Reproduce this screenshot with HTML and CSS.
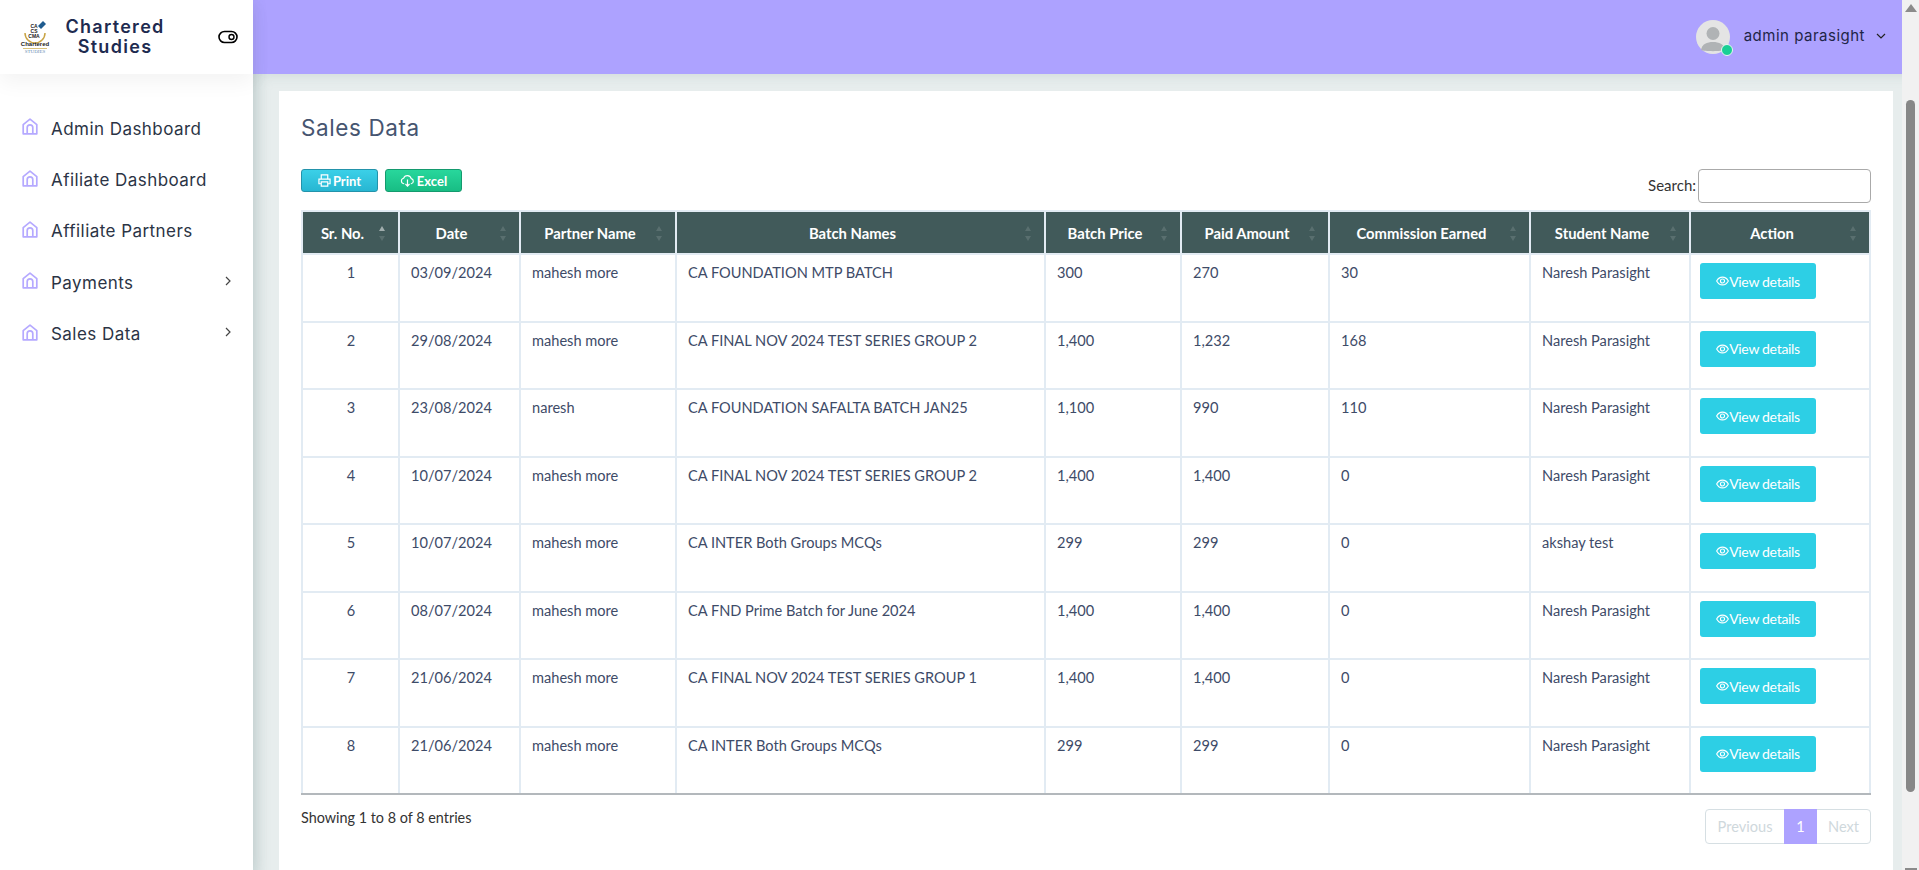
FILE: index.html
```html
<!DOCTYPE html>
<html lang="en">
<head>
<meta charset="utf-8">
<title>Sales Data</title>
<link rel="stylesheet" href="styles.css">
</head>
<body>
<svg class="defs" width="0" height="0" aria-hidden="true">
  <symbol id="home" viewBox="0 0 16 17">
    <path d="M1.200 6.600 8 1.200l6.800 5.400v9.200H1.200z" fill="none" stroke="currentColor" stroke-width="1.700" stroke-linejoin="round"/>
    <path d="M5.200 15.600V9.600a2.800 2.800 0 0 1 5.600 0v6" fill="none" stroke="currentColor" stroke-width="1.700"/>
  </symbol>
  <symbol id="eye" viewBox="0 0 14 10">
    <path d="M.7 5C2.200 2.200 4.400.8 7 .8s4.800 1.400 6.300 4.200C11.800 7.800 9.600 9.200 7 9.200S2.200 7.800.7 5z" fill="none" stroke="currentColor" stroke-width="1.200"/>
    <circle cx="7" cy="5" r="2.200" fill="none" stroke="currentColor" stroke-width="1.200"/>
  </symbol>
</svg>
<div class="app">
  <aside class="sidebar">
    <div class="brand">
      <svg class="logo" viewBox="0 0 30 38" width="30" height="38">
        <path d="M5 15a10 10 0 0 0 20 0" fill="none" stroke="#c9a445" stroke-width="1.500"/>
        <path d="M18 8l5-5 3 3-5 5z" fill="#1f5c8f"/>
        <text class="logo-s" x="14" y="10">CA</text>
        <text class="logo-s" x="14" y="15">CS</text>
        <text class="logo-s" x="14" y="20">CMA</text>
        <text class="logo-m" x="15" y="28">Chartered</text>
        <rect x="3" y="30" width="24" height="1" fill="#d9c27a"/>
        <text class="logo-t" x="15" y="35">STUDIES</text>
      </svg>
      <div class="brand-name">Chartered<br>Studies</div>
      <svg class="toggle" viewBox="0 0 20 14" width="20" height="14">
        <rect x="1" y="1.500" width="18" height="11" rx="5.500" fill="none" stroke="#000" stroke-width="1.600"/>
        <circle cx="13.500" cy="7" r="2.500" fill="none" stroke="#000" stroke-width="1.400"/>
      </svg>
    </div>
    <nav class="menu">
      <a class="menu-item"><svg class="home"><use href="#home"/></svg><span>Admin Dashboard</span></a>
      <a class="menu-item"><svg class="home"><use href="#home"/></svg><span>Afiliate Dashboard</span></a>
      <a class="menu-item"><svg class="home"><use href="#home"/></svg><span>Affiliate Partners</span></a>
      <a class="menu-item"><svg class="home"><use href="#home"/></svg><span>Payments</span><svg class="chev" viewBox="0 0 6 10"><path d="M1 1l4 4-4 4" fill="none" stroke="currentColor" stroke-width="1.200"/></svg></a>
      <a class="menu-item"><svg class="home"><use href="#home"/></svg><span>Sales Data</span><svg class="chev" viewBox="0 0 6 10"><path d="M1 1l4 4-4 4" fill="none" stroke="currentColor" stroke-width="1.200"/></svg></a>
    </nav>
  </aside>
  <div class="main">
    <header class="topbar">
      <div class="avatar">
        <svg viewBox="0 0 34 34" width="34" height="34">
          <circle cx="17" cy="17" r="17" fill="#e4e4e4"/>
          <circle cx="17" cy="13.500" r="6.500" fill="#b0b3b5"/>
          <path d="M5 30c1-6 6-8 12-8s11 2 12 8c-3 1.500-21 1.500-24 0z" fill="#b0b3b5"/>
        </svg>
        <i class="status"></i>
      </div>
      <span class="username">admin parasight</span>
      <svg class="caret" viewBox="0 0 10 6" width="10" height="6"><path d="M1 1l4 4 4-4" fill="none" stroke="#222" stroke-width="1.200"/></svg>
    </header>
    <main class="content">
      <section class="card">
        <h1 class="title">Sales Data</h1>
        <div class="toolbar">
          <div class="actions">
            <button class="tool tool-print"><svg viewBox="0 0 14 14" width="13" height="13"><path d="M3.500 5V1h7v4M3.500 10.500H1V5.500h12v5h-2.500M3.500 8.500h7V13h-7z" fill="none" stroke="currentColor" stroke-width="1.300"/></svg>Print</button>
            <button class="tool tool-excel"><svg viewBox="0 0 16 14" width="15" height="13"><path d="M4.500 10.500H4A3 3 0 0 1 3.800 4.600 4.300 4.300 0 0 1 12 5a2.800 2.800 0 0 1 0 5.500h-.5" fill="none" stroke="currentColor" stroke-width="1.200"/><path d="M8 6v7M5.800 10.800 8 13l2.200-2.200" fill="none" stroke="currentColor" stroke-width="1.300"/></svg>Excel</button>
          </div>
          <label class="search">Search:<input type="text"></label>
        </div>
        <table class="grid">
          <colgroup>
            <col class="c1"><col class="c2"><col class="c3"><col class="c4"><col class="c5"><col class="c6"><col class="c7"><col class="c8"><col class="c9">
          </colgroup>
          <thead>
            <tr>
              <th class="sorted">Sr. No.</th><th>Date</th><th>Partner Name</th><th>Batch Names</th><th>Batch Price</th><th>Paid Amount</th><th>Commission Earned</th><th>Student Name</th><th>Action</th>
            </tr>
          </thead>
          <tbody>
            <tr><td class="num">1</td><td>03/09/2024</td><td>mahesh more</td><td>CA FOUNDATION MTP BATCH</td><td>300</td><td>270</td><td>30</td><td>Naresh Parasight</td><td class="act"><button class="view"><svg class="eye"><use href="#eye"/></svg>View details</button></td></tr>
            <tr><td class="num">2</td><td>29/08/2024</td><td>mahesh more</td><td>CA FINAL NOV 2024 TEST SERIES GROUP 2</td><td>1,400</td><td>1,232</td><td>168</td><td>Naresh Parasight</td><td class="act"><button class="view"><svg class="eye"><use href="#eye"/></svg>View details</button></td></tr>
            <tr><td class="num">3</td><td>23/08/2024</td><td>naresh</td><td>CA FOUNDATION SAFALTA BATCH JAN25</td><td>1,100</td><td>990</td><td>110</td><td>Naresh Parasight</td><td class="act"><button class="view"><svg class="eye"><use href="#eye"/></svg>View details</button></td></tr>
            <tr><td class="num">4</td><td>10/07/2024</td><td>mahesh more</td><td>CA FINAL NOV 2024 TEST SERIES GROUP 2</td><td>1,400</td><td>1,400</td><td>0</td><td>Naresh Parasight</td><td class="act"><button class="view"><svg class="eye"><use href="#eye"/></svg>View details</button></td></tr>
            <tr><td class="num">5</td><td>10/07/2024</td><td>mahesh more</td><td>CA INTER Both Groups MCQs</td><td>299</td><td>299</td><td>0</td><td>akshay test</td><td class="act"><button class="view"><svg class="eye"><use href="#eye"/></svg>View details</button></td></tr>
            <tr><td class="num">6</td><td>08/07/2024</td><td>mahesh more</td><td>CA FND Prime Batch for June 2024</td><td>1,400</td><td>1,400</td><td>0</td><td>Naresh Parasight</td><td class="act"><button class="view"><svg class="eye"><use href="#eye"/></svg>View details</button></td></tr>
            <tr><td class="num">7</td><td>21/06/2024</td><td>mahesh more</td><td>CA FINAL NOV 2024 TEST SERIES GROUP 1</td><td>1,400</td><td>1,400</td><td>0</td><td>Naresh Parasight</td><td class="act"><button class="view"><svg class="eye"><use href="#eye"/></svg>View details</button></td></tr>
            <tr><td class="num">8</td><td>21/06/2024</td><td>mahesh more</td><td>CA INTER Both Groups MCQs</td><td>299</td><td>299</td><td>0</td><td>Naresh Parasight</td><td class="act"><button class="view"><svg class="eye"><use href="#eye"/></svg>View details</button></td></tr>
          </tbody>
        </table>
        <div class="table-foot">
          <div class="info">Showing 1 to 8 of 8 entries</div>
          <div class="pager">
            <a class="page page-prev">Previous</a><a class="page page-on">1</a><a class="page page-next">Next</a>
          </div>
        </div>
      </section>
    </main>
  </div>
  <div class="scrollbar">
    <i class="arrow-up"></i>
    <i class="thumb"></i>
    <i class="arrow-down"></i>
  </div>
</div>
</body>
</html>
```
FILE: styles.css
```css
* { box-sizing: border-box; }
html, body { margin: 0; height: 870px; overflow: hidden; }
body { font-family: "Lato", "Liberation Sans", sans-serif; background: #e7eded; color: #3c4a66; }
.defs { position: absolute; }
.app { display: flex; height: 870px; overflow: hidden; }

/* sidebar */
.sidebar { width: 253px; flex: none; background: #fff; display: flex; flex-direction: column; box-shadow: 0 0 14px rgba(90, 110, 110, .14); position: relative; z-index: 2; }
.brand { height: 74px; display: flex; align-items: center; padding: 0 15px 0 20px; box-shadow: 0 8px 20px rgba(0, 0, 0, .05); }
.logo { flex: none; }
.logo-s { font: 700 5px "Liberation Sans", sans-serif; fill: #222; text-anchor: middle; }
.logo-m { font: 700 6px "Liberation Sans", sans-serif; fill: #222; text-anchor: middle; }
.logo-t { font: 400 5px "Liberation Serif", serif; fill: #6b8db3; text-anchor: middle; }
.brand-name { flex: 1; text-align: center; font: 600 18px/20px "Inter", sans-serif; letter-spacing: 1.300px; color: #1e2b50; padding-right: 38px; white-space: nowrap; }
.toggle { flex: none; }
.menu { display: flex; flex-direction: column; padding-top: 29px; }
.menu-item { display: flex; align-items: center; height: 51.400px; padding: 0 21px 0 22px; font: 400 17px "Inter", sans-serif; letter-spacing: .45px; color: #2b3445; }
.menu-item span { flex: 1; margin-left: 13px; }
.home { width: 16px; height: 17px; color: #b5a9ff; position: relative; top: -2px; }
.chev { width: 6px; height: 10px; color: #444; position: relative; top: -2px; left: -1px; }

/* topbar */
.main { flex: 1; min-width: 0; display: flex; flex-direction: column; }
.topbar { height: 74px; flex: none; background: #ada2ff; display: flex; align-items: center; padding: 0 17px 0 0; justify-content: flex-end; }
.avatar { position: relative; width: 34px; height: 34px; margin-right: 14px; }
.avatar svg { display: block; }
.status { position: absolute; right: -3px; bottom: -2px; width: 12px; height: 12px; border-radius: 50%; background: #19cf95; border: 1px solid #eaf6f2; }
.username { font: 400 15px "Inter", sans-serif; letter-spacing: .5px; color: #1f2547; margin-right: 10px; position: relative; top: -2px; }
.caret { position: relative; top: -1px; left: 1px; }

/* content */
.content { flex: 1; min-height: 0; padding: 17px 9px 0 26px; box-shadow: inset 12px 8px 14px -8px rgba(120, 150, 150, .25); }
.card { background: #fff; height: 100%; padding: 0 22px; }
.title { margin: 0; padding-top: 24px; height: 78px; font: 400 22.500px/26px "Inter", sans-serif; letter-spacing: .6px; color: #465570; }
.toolbar { display: flex; justify-content: space-between; height: 41px; }
.actions { display: flex; gap: 7px; align-items: flex-start; }
.tool { width: 77px; height: 23px; display: flex; align-items: center; justify-content: center; gap: 2px; padding: 0; border-radius: 3px; font: 700 13px "Lato", sans-serif; color: #fff; cursor: pointer; }
.tool-print { background: linear-gradient(#3bd0e8, #27b6d2); border: 1px solid #2393ab; }
.tool-excel { background: linear-gradient(#28d79c, #18bd84); border: 1px solid #149a6e; }
.search { display: flex; align-items: flex-start; gap: 2px; font-size: 15px; color: #333; line-height: 32px; height: 34px; }
.search input { width: 173px; height: 34px; border: 1px solid #aaa; border-radius: 4px; background: #fff; padding: 0; }

/* table */
.grid { width: 1570px; table-layout: fixed; border-collapse: collapse; font-size: 14.600px; }
.c1 { width: 97px; } .c2 { width: 121px; } .c3 { width: 156px; } .c4 { width: 369px; } .c5 { width: 136px; }
.c6 { width: 148px; } .c7 { width: 201px; } .c8 { width: 160px; } .c9 { width: 180px; }
.grid th, .grid td { border: 2px solid #e2ebf3; }
.grid th { position: relative; height: 43px; padding: 0 16px 0 0; background: #415a5a; color: #fff; font-weight: 700; font-size: 14.800px; text-align: center; }
.grid th::before, .grid th::after { content: ""; position: absolute; right: 13px; width: 0; height: 0; border-left: 3.500px solid transparent; border-right: 3.500px solid transparent; }
.grid th::before { top: 14px; border-bottom: 5px solid rgba(255, 255, 255, .13); }
.grid th::after { top: 24px; border-top: 5px solid rgba(255, 255, 255, .13); }
.grid th.sorted::before { border-bottom-color: rgba(255, 255, 255, .5); }
.grid td { height: 67.500px; padding: 7px 11px 0; vertical-align: top; line-height: 22px; color: #3e4b68; }
.grid td.num { text-align: center; padding: 7px 10px 0 11px; }
.grid td.act { padding: 8px 0 0 9px; }
.view { width: 116px; height: 36px; display: flex; align-items: center; justify-content: center; border: 0; border-radius: 3px; background: #2dcfe5; color: #fff; font: 400 14px "Lato", sans-serif; letter-spacing: -.3px; padding: 0; cursor: pointer; }
.eye { width: 13px; height: 10px; }
.grid tbody tr:last-child td { border-bottom-color: #b3b8bc; }

/* footer */
.table-foot { display: flex; justify-content: space-between; align-items: flex-start; padding-top: 14px; }
.info { font-size: 14.400px; color: #333; line-height: 18px; }
.pager { display: flex; height: 35px; border: 1px solid #d6dfe3; border-radius: 4px; }
.page { display: flex; align-items: center; justify-content: center; font-size: 14.600px; color: #cfd8dc; }
.page-prev { width: 78px; }
.page-on { width: 33px; margin: -1px 0; background: #ada2ff; color: #fff; }
.page-next { width: 53px; }

/* scrollbar */
.scrollbar { width: 17px; flex: none; background: #f1f1f1; display: flex; flex-direction: column; align-items: center; position: relative; }
.arrow-up { width: 0; height: 0; margin-top: 4px; border-left: 6px solid transparent; border-right: 6px solid transparent; border-bottom: 8px solid #8b8b8b; }
.thumb { width: 9px; height: 692px; margin-top: 88px; border-radius: 5px; background: #878787; }
.arrow-down { width: 12px; height: 2px; margin-top: 76px; background: #8b8b8b; }
```
